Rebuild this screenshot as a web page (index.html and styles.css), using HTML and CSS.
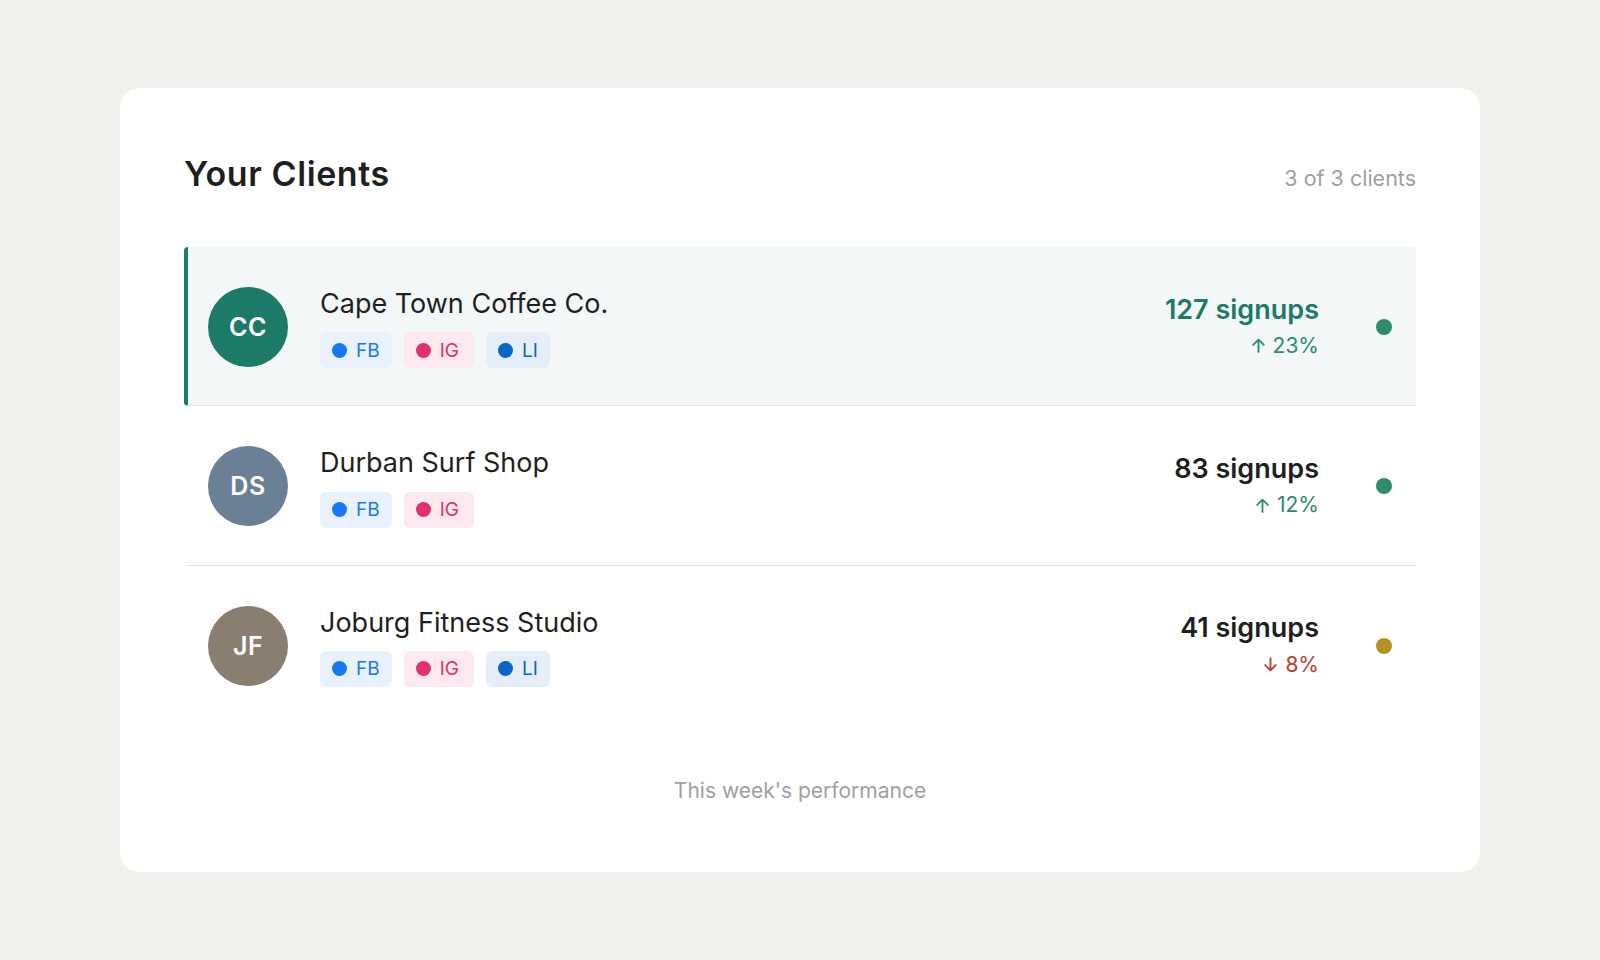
FILE: index.html
```html
<!DOCTYPE html>
<html lang="en">
<head>
<meta charset="utf-8">
<title>Your Clients</title>
<link rel="stylesheet" href="styles.css">
</head>
<body>
<main class="card">
  <header class="card-header">
    <h1 class="title">Your Clients</h1>
    <span class="count">3 of 3 clients</span>
  </header>
  <ul class="clients">
    <li class="client active">
      <div class="avatar av-teal">CC</div>
      <div class="info">
        <div class="name">Cape Town Coffee Co.</div>
        <div class="tags">
          <span class="tag fb"><i class="dot"></i>FB</span>
          <span class="tag ig"><i class="dot"></i>IG</span>
          <span class="tag li"><i class="dot"></i>LI</span>
        </div>
      </div>
      <div class="stats">
        <div class="signups green">127 signups</div>
        <div class="change up"><svg class="arrow" viewBox="0 0 16 16"><path d="M8 14V2.5M3 7.5L8 2.5l5 5"/></svg>23%</div>
      </div>
      <span class="status s-green"></span>
    </li>
    <li class="client">
      <div class="avatar av-slate">DS</div>
      <div class="info">
        <div class="name">Durban Surf Shop</div>
        <div class="tags">
          <span class="tag fb"><i class="dot"></i>FB</span>
          <span class="tag ig"><i class="dot"></i>IG</span>
        </div>
      </div>
      <div class="stats">
        <div class="signups">83 signups</div>
        <div class="change up"><svg class="arrow" viewBox="0 0 16 16"><path d="M8 14V2.5M3 7.5L8 2.5l5 5"/></svg>12%</div>
      </div>
      <span class="status s-green"></span>
    </li>
    <li class="client">
      <div class="avatar av-taupe">JF</div>
      <div class="info">
        <div class="name">Joburg Fitness Studio</div>
        <div class="tags">
          <span class="tag fb"><i class="dot"></i>FB</span>
          <span class="tag ig"><i class="dot"></i>IG</span>
          <span class="tag li"><i class="dot"></i>LI</span>
        </div>
      </div>
      <div class="stats">
        <div class="signups">41 signups</div>
        <div class="change down"><svg class="arrow" viewBox="0 0 16 16"><path d="M8 2v11.5M3 8.5l5 5 5-5"/></svg>8%</div>
      </div>
      <span class="status s-gold"></span>
    </li>
  </ul>
  <footer class="card-footer">This week's performance</footer>
</main>
</body>
</html>
```
FILE: styles.css
```css
* { box-sizing: border-box; }
html, body { margin: 0; padding: 0; }
body {
  background: #f0efeb;
  width: 1600px;
  height: 960px;
  display: flex;
  align-items: center;
  justify-content: center;
  font-family: Inter, "Noto Sans", sans-serif;
  color: #1f1f1f;
}
.card {
  width: 1360px;
  height: 784px;
  background: #ffffff;
  border-radius: 20px;
  padding: 64px 64px 0;
  display: flex;
  flex-direction: column;
}
.card-header {
  display: flex;
  justify-content: space-between;
  align-items: baseline;
  padding-top: 2px;
  margin-bottom: 52px;
}
.title {
  margin: 0;
  font-size: 34px;
  line-height: 1.2;
  font-weight: 600;
  letter-spacing: 0.6px;
  color: #1f1f1f;
}
.count {
  font-size: 21.5px;
  color: #a0a0a0;
}
.clients {
  list-style: none;
  margin: 0;
  padding: 0;
}
.client {
  display: flex;
  align-items: center;
  padding: 40px 24px 38px 20px;
  border-left: 4px solid transparent;
  border-bottom: 1px solid #e4e4e4;
}
.client:last-child { border-bottom: none; }
.client.active {
  background: #f4f7f8;
  border-left-color: #1b7a68;
  border-radius: 4px 0 0 4px;
}
.avatar {
  width: 80px;
  height: 80px;
  border-radius: 50%;
  flex-shrink: 0;
  display: flex;
  align-items: center;
  justify-content: center;
  color: #ffffff;
  font-size: 25px;
  font-weight: 600;
  letter-spacing: 0.5px;
  margin-right: 32px;
}
.av-teal { background: #1c7a68; }
.av-slate { background: #6b8095; }
.av-taupe { background: #8a7e71; }
.info {
  flex: 1;
  display: flex;
  flex-direction: column;
  gap: 12px;
  margin: 1px 0 -1px;
}
.name {
  font-size: 27px;
  line-height: 1.2;
  font-weight: 400;
  color: #1f1f1f;
}
.tags {
  display: flex;
  gap: 12px;
}
.tag {
  display: inline-flex;
  align-items: center;
  height: 36px;
  padding: 0 12px;
  border-radius: 6px;
  font-size: 19px;
  gap: 9px;
}
.tag .dot {
  width: 15px;
  height: 15px;
  border-radius: 50%;
  display: inline-block;
}
.tag.fb { background: #e9f1fc; color: #1877f2; }
.tag.fb .dot { background: #1877f2; }
.tag.ig { background: #fbe9ee; color: #e1306c; padding-right: 15px; }
.tag.ig .dot { background: #e1306c; }
.tag.li { background: #e5eef8; color: #0a66c2; }
.tag.li .dot { background: #0a66c2; }
.stats {
  text-align: right;
  display: flex;
  flex-direction: column;
  align-items: flex-end;
  margin-top: -1px;
}
.signups {
  font-size: 27px;
  line-height: 1.2;
  font-weight: 600;
  color: #1f1f1f;
}
.signups.green { color: #1c7a68; }
.change {
  display: flex;
  align-items: center;
  gap: 6px;
  font-size: 21px;
  line-height: 1.3;
  margin-top: 6px;
}
.change.up { color: #2e8b6e; }
.change.down { color: #b5432f; }
.arrow {
  width: 17px;
  height: 17px;
  fill: none;
  stroke: currentColor;
  stroke-width: 1.7;
  stroke-linecap: round;
  stroke-linejoin: round;
}
.status {
  width: 16px;
  height: 16px;
  border-radius: 50%;
  margin-left: 57px;
  flex-shrink: 0;
}
.s-green { background: #2e8b6e; }
.s-gold { background: #b3931f; }
.card-footer {
  margin-top: 55px;
  text-align: center;
  font-size: 21px;
  line-height: 24px;
  color: #a0a0a0;
}
```
